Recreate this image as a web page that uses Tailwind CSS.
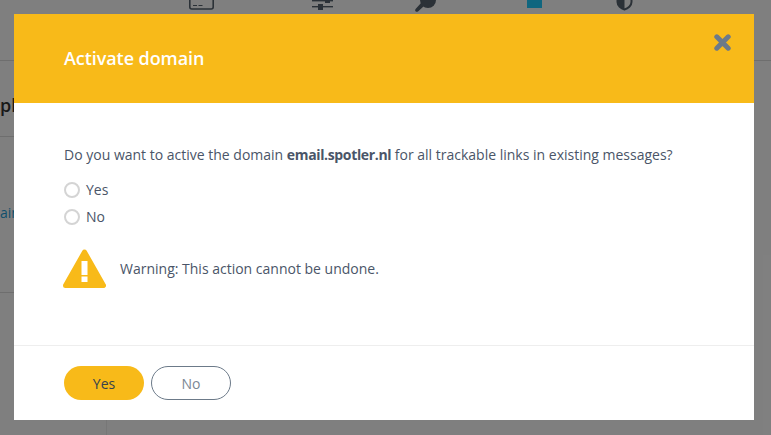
<!DOCTYPE html>
<html lang="en">
<head>
    <meta charset="UTF-8">
    <title>Activate domain</title>
    <script src="https://cdn.jsdelivr.net/npm/@tailwindcss/browser@4"></script>
</head>
<body class="bg-white font-['Open_Sans',sans-serif]">
    <div class="relative w-[771px] h-[435px] overflow-hidden">
        <!-- page behind the modal -->
        <div class="h-[61px] border-b border-[#dddddd]">
            <div class="flex items-start pl-[189px] h-[14px] overflow-hidden">
                <svg class="w-[25px] h-[10px] shrink-0" viewBox="0 0 25 10" fill="none" stroke="#56626e" stroke-width="1.6"><rect x="0.8" y="-8" width="23.4" height="17" rx="2"/><path d="M4 5.5h4M9.5 5.5h4" stroke-width="1.2"/></svg>
                <svg class="ml-[98px] w-[21px] h-[11px] shrink-0" viewBox="0 0 21 11" fill="#56626e"><rect x="0" y="0" width="21" height="1.4"/><rect x="13" y="0" width="5" height="3"/><rect x="0" y="6" width="21" height="1.4"/><rect x="6" y="4" width="5" height="6"/></svg>
                <svg class="ml-[82px] w-[22px] h-[12px] shrink-0" viewBox="0 0 22 12" fill="#56626e"><circle cx="13" cy="0" r="8"/><path d="M6 3l3 3-6 5.5c-1 .6-2 .4-2.5-.3s-.5-1.700.3-2.500z"/></svg>
                <div class="ml-[90px] w-[15px] h-[8px] shrink-0 bg-[#20ccff]"></div>
                <svg class="ml-[74px] w-[17px] h-[11px] shrink-0" viewBox="0 0 17 11"><path d="M1.500 -4h14v6c0 3.500-3.500 6.500-7 7.500-3.500-1-7-4-7-7.500z" fill="none" stroke="#56626e" stroke-width="2"/><path d="M1.500 -4h7v13.500c-3.500-1-7-4-7-7.500z" fill="#56626e"/></svg>
            </div>
        </div>
        <div class="flex h-[374px]">
            <div class="w-[107px] border-r border-[#eeeeee] shrink-0 overflow-hidden">
                <div class="h-[76px] border-b border-[#dddddd] pt-[32px] text-[18px] leading-6 font-semibold text-[#333333] whitespace-nowrap">ph</div>
                <div class="h-[156px] border-b border-[#dddddd] pt-[66px] text-[14px] leading-5 text-[#1f9fd8]">ain</div>
            </div>
            <div class="flex-1"></div>
        </div>

        <!-- overlay and modal -->
        <div class="absolute inset-0 bg-black/50">
            <div class="absolute left-[14px] top-[14px] w-[740px] h-[406px] bg-white flex flex-col text-[#4a5568]">
                <div class="relative h-[89px] shrink-0 bg-[#f8ba19] flex items-center pl-[50px] pb-[2px]">
                    <h1 class="text-[18px] leading-6 font-semibold text-white tracking-[-0.07px]">Activate domain</h1>
                    <svg class="absolute left-[700px] top-[20px] w-[17px] h-[17px]" viewBox="0 0 17 17" fill="none" stroke="#6c7a89" stroke-width="5" stroke-linecap="round"><path d="M2.800 2.800l11.400 11.400M14.200 2.800L2.800 14.200"/></svg>
                </div>
                <div class="h-[243px] shrink-0 border-b border-[#eeeeee] pl-[50px] pt-[42px] text-[14px] leading-5">
                    <p>Do you want to active the domain <b class="font-bold tracking-[-0.35px]">email.spotler.nl</b> for all trackable links in existing messages?</p>
                    <div class="mt-[15px] flex flex-col gap-[7px]">
                        <label class="flex items-center gap-[6px] h-5">
                            <span class="w-4 h-4 rounded-full border-2 border-[#d4d4d4] bg-white"></span>Yes
                        </label>
                        <label class="flex items-center gap-[6px] h-5">
                            <span class="w-4 h-4 rounded-full border-2 border-[#d4d4d4] bg-white"></span>No
                        </label>
                    </div>
                    <div class="mt-[22px] -ml-px flex items-center gap-[14px]">
                        <svg class="w-[43px] h-[39px] shrink-0" viewBox="0 0 43 39">
                            <path d="M21.500 3L40.500 36.500H2.500z" fill="#f8ba19" stroke="#f8ba19" stroke-width="5" stroke-linejoin="round"/>
                            <rect x="18.500" y="12" width="6" height="14" fill="#fff"/>
                            <rect x="18.500" y="27.500" width="6" height="5.500" fill="#fff"/>
                        </svg>
                        <span>Warning: This action cannot be undone.</span>
                    </div>
                </div>
                <div class="flex-1 flex items-start gap-[7px] pl-[50px] pt-[20px] text-[14px]">
                    <button class="w-[80px] h-[34px] rounded-full bg-[#f8ba19] text-[#36424e]">Yes</button>
                    <button class="w-[80px] h-[34px] rounded-full border border-[#6c7a89] bg-white text-[#7b8794]">No</button>
                </div>
            </div>
        </div>
    </div>
</body>
</html>
